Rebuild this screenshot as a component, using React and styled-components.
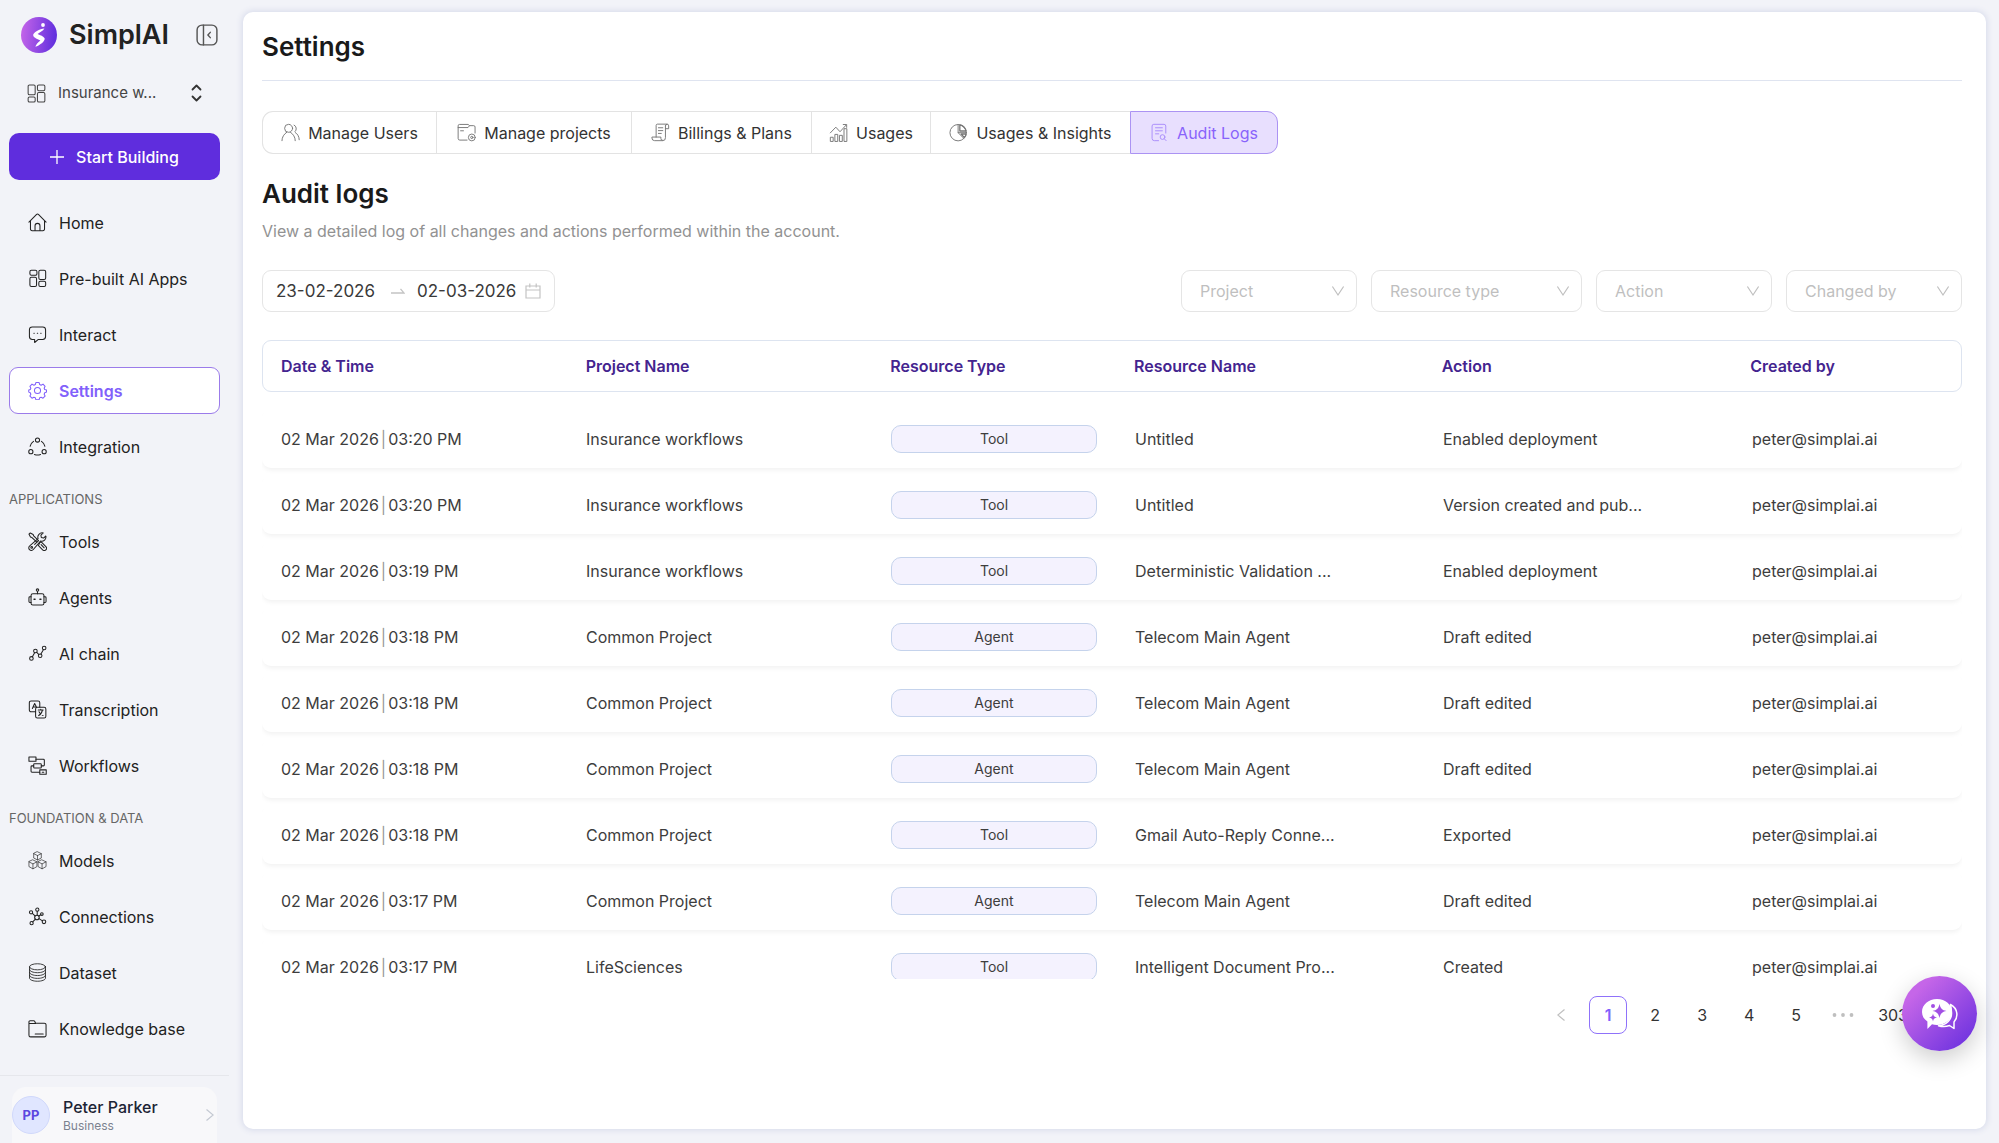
import React, { useState } from 'react';
import styled, { createGlobalStyle } from 'styled-components';

const GlobalStyle = createGlobalStyle`
    *, *::before, *::after {
        box-sizing: border-box;
    }

    body {
        margin: 0;
        background: #f2f3f8;
        color: #2b2b2b;
        font-family: Inter, sans-serif;
        font-size: 16px;
        line-height: 24px;
    }

    button, input, select {
        font: inherit;
        color: inherit;
    }

    h1, h2, p, ul {
        margin: 0;
        padding: 0;
    }
`;

/* ---------- Layout ---------- */

const Page = styled.div`
    display: grid;
    grid-template-columns: 229px 1fr;
    column-gap: 14px;
    height: 100vh;
    overflow: hidden;
`;

const Sidebar = styled.aside`
    display: flex;
    flex-direction: column;
    padding-top: 17px;
    min-height: 0;
`;

const Panel = styled.main`
    display: flex;
    flex-direction: column;
    min-width: 0;
    margin: 12px 13px 14px 0;
    padding: 16px 24px 19px 19px;
    background: #fff;
    border-radius: 10px;
    box-shadow: 0 0 6px 1px #d6daea;
`;

/* ---------- Sidebar ---------- */

const Brand = styled.div`
    display: flex;
    align-items: center;
    gap: 12px;
    height: 36px;
    padding: 0 11px 0 21px;
`;

const BrandName = styled.span`
    flex: 1;
    font-size: 27px;
    font-weight: 600;
    line-height: 36px;
    color: #222;
`;

const IconButton = styled.button`
    display: flex;
    padding: 0;
    border: 0;
    background: none;
    color: #555;
    cursor: pointer;
`;

const WorkspaceButton = styled.button`
    display: flex;
    align-items: center;
    gap: 12px;
    height: 48px;
    margin: 16px 9px 0;
    padding: 0 18px;
    border: 0;
    background: none;
    color: #444;
    font-size: 15px;
    text-align: left;
    cursor: pointer;

    span {
        flex: 1;
        white-space: nowrap;
    }
`;

const BuildButton = styled.button`
    display: flex;
    align-items: center;
    justify-content: center;
    gap: 12px;
    height: 47px;
    margin: 16px 9px 19px;
    border: 0;
    border-radius: 10px;
    background: #5f2ddd;
    color: #fff;
    font-weight: 500;
    cursor: pointer;
`;

const NavList = styled.ul`
    display: grid;
    gap: 9px;
    padding: 0 9px;
    list-style: none;
`;

const NavLink = styled.a`
    display: flex;
    align-items: center;
    gap: 12px;
    height: 47px;
    padding: 0 18px;
    border: 1px solid ${({ $active }) => ($active ? '#9b7bea' : 'transparent')};
    border-radius: 9px;
    background: ${({ $active }) => ($active ? '#fff' : 'transparent')};
    color: ${({ $active }) => ($active ? '#8160fb' : '#222')};
    font-weight: ${({ $active }) => ($active ? 600 : 400)};
    text-decoration: none;
    white-space: nowrap;
`;

const NavHeading = styled.h2`
    height: 48px;
    padding: 19px 9px 0;
    font-size: 13px;
    font-weight: 400;
    line-height: 20px;
    color: #666;
`;

const Profile = styled.div`
    margin-top: auto;
    padding: 11px 12px 0;
    border-top: 1px solid #e6e7ec;
`;

const ProfileButton = styled.button`
    display: flex;
    align-items: center;
    width: 100%;
    height: 56px;
    padding: 0 3px 0 0;
    border: 0;
    border-radius: 14px 14px 0 0;
    background: #f8f8fa;
    color: #c3c8d2;
    text-align: left;
    cursor: pointer;
`;

const Avatar = styled.span`
    width: 38px;
    height: 38px;
    border: 1px solid #d0d8fb;
    border-radius: 50%;
    background: #e0e6ff;
    color: #5b47e0;
    font-size: 13px;
    font-weight: 700;
    line-height: 36px;
    text-align: center;
`;

const ProfileText = styled.span`
    display: grid;
    flex: 1;
    margin-left: 13px;
    color: #1c2434;
    font-weight: 500;
    line-height: 20px;

    small {
        color: #7b828f;
        font-size: 12px;
        font-weight: 400;
        line-height: 17px;
    }
`;

/* ---------- Content ---------- */

const Title = styled.h1`
    font-size: 26px;
    font-weight: 600;
    line-height: 38px;
    color: #1a1a1a;
`;

const Header = styled.header`
    padding-bottom: 14px;
    border-bottom: 1px solid #dfe4f0;
`;

const Tabs = styled.nav`
    display: grid;
    grid-template-columns: 174px 195px 180px 119px 200px 148px;
    margin: 30px 0 21px;
`;

const Tab = styled.button`
    display: flex;
    align-items: center;
    justify-content: center;
    gap: 8px;
    height: 43px;
    padding: 0;
    border: 1px solid #e3e3e3;
    border-right-width: 0;
    background: #fff;
    color: #333;
    white-space: nowrap;
    cursor: pointer;

    svg {
        color: #777;
    }

    &:first-child {
        border-radius: 11px 0 0 11px;
    }

    &:last-child {
        border-right-width: 1px;
        border-radius: 0 11px 11px 0;
    }

    ${({ $active }) => $active && `
        border-color: #ab93f3;
        background: #e8dffe;
        color: #8863fb;

        svg {
            color: #a98cfb;
        }
    `}
`;

const Subtitle = styled.p`
    margin-top: 6px;
    color: #929292;
`;

const FilterBar = styled.div`
    display: flex;
    justify-content: space-between;
    margin: 27px 0 28px;
`;

const DateRange = styled.div`
    display: flex;
    align-items: center;
    width: 293px;
    height: 42px;
    padding: 0 12px 0 13px;
    border: 1px solid #e5e5e5;
    border-radius: 9px;
    color: #c4c4c4;
`;

const DateInput = styled.input`
    width: 108px;
    padding: 0;
    border: 0;
    outline: 0;
    background: none;
    color: #3a3a3a;
    font-size: 17px;
`;

const DateSeparator = styled.span`
    display: flex;
    width: 33px;
    padding-left: 7px;
`;

const Filters = styled.div`
    display: flex;
    gap: 14px;
`;

const SelectBox = styled.div`
    position: relative;
    width: ${({ $wide }) => ($wide ? '211px' : '176px')};
    color: #bfbfbf;

    select {
        width: 100%;
        height: 42px;
        padding: 0 36px 0 18px;
        border: 1px solid #e5e5e5;
        border-radius: 9px;
        outline: 0;
        background: #fff;
        appearance: none;
    }

    svg {
        position: absolute;
        top: 14px;
        right: 12px;
        pointer-events: none;
    }
`;

const LogTable = styled.table`
    display: block;
    width: 100%;

    thead {
        display: block;
    }

    tbody {
        display: block;
        max-height: calc(100vh - 556px);
        padding-top: 18px;
        overflow: hidden;
    }

    tr {
        display: grid;
        grid-template-columns: 305fr 305fr 244fr 308fr 309fr 229fr;
        align-items: center;
    }
`;

const HeadRow = styled.tr`
    height: 52px;
    border: 1px solid #dde4f0;
    border-radius: 9px;

    th {
        padding: 0 18px;
        color: #44248f;
        font-weight: 600;
        text-align: left;
    }
`;

const LogRow = styled.tr`
    height: 58px;
    margin-bottom: 8px;
    border-radius: 9px;
    box-shadow: 0 3px 5px -1px rgba(0, 0, 0, 0.06);

    td {
        min-width: 0;
        padding: 0 19px;
        color: #3d3d3d;
        white-space: nowrap;
    }
`;

const Divider = styled.span`
    margin: 0 2px;
    color: #999;
`;

const TypeTag = styled.span`
    display: block;
    height: 28px;
    border: 1px solid #c5d3ec;
    border-radius: 10px;
    background: #f4f2fe;
    font-size: 14px;
    line-height: 26px;
    text-align: center;
`;

const Pagination = styled.nav`
    display: flex;
    justify-content: flex-end;
    gap: 9px;
    margin-top: 17px;
`;

const PageButton = styled.button`
    display: flex;
    align-items: center;
    justify-content: center;
    min-width: 38px;
    height: 38px;
    padding: 0 6px;
    border: 1px solid ${({ $active }) => ($active ? '#8f72fa' : 'transparent')};
    border-radius: 8px;
    background: none;
    color: ${({ $active, $muted }) => ($active ? '#8160fb' : $muted ? '#bfbfbf' : '#333')};
    font-weight: ${({ $active }) => ($active ? 600 : 400)};
    cursor: pointer;
`;

const ChatButton = styled.button`
    position: fixed;
    right: 22px;
    bottom: 92px;
    display: flex;
    align-items: center;
    justify-content: center;
    width: 75px;
    height: 75px;
    padding: 0;
    border: 0;
    border-radius: 50%;
    background: linear-gradient(135deg, #c566e8 20%, #6f33df 90%);
    box-shadow: 0 8px 24px rgba(0, 0, 0, 0.2);
    color: #fff;
    cursor: pointer;
`;

/* ---------- Icons ---------- */

const Icon = ({ size = 19, children, width = 1.1 }) => (
    <svg width={size} height={size} viewBox="0 0 20 20" fill="none" stroke="currentColor"
        strokeWidth={width} strokeLinecap="round" strokeLinejoin="round" aria-hidden="true">
        {children}
    </svg>
);

const icons = {
    workspace: (
        <>
            <rect x="1.2" y="1" width="7.4" height="10.4" rx="1.4" />
            <rect x="11" y="1" width="7.8" height="6" rx="1.4" />
            <rect x="1.2" y="13.6" width="7.4" height="5.4" rx="1.4" />
            <rect x="11" y="9" width="7.8" height="10" rx="1.4" />
        </>
    ),
    home: (
        <>
            <path d="M1 9.6 8.8 1.6a1.7 1.7 0 0 1 2.4 0L19 9.6" />
            <path d="M2.6 8.6v8.2a1.8 1.8 0 0 0 1.8 1.9h11.2a1.8 1.8 0 0 0 1.8-1.9V8.6" />
            <path d="M7.4 18.5v-5a2.6 2.6 0 0 1 5.2 0v5" />
        </>
    ),
    apps: (
        <>
            <rect x="2" y="1.4" width="7.4" height="5.2" rx="1.6" />
            <rect x="11.4" y="1.4" width="7.2" height="9.6" rx="1.6" />
            <rect x="2" y="8.6" width="7" height="9.8" rx="1.6" />
            <rect x="11.4" y="13" width="7.2" height="5.4" rx="1.6" />
        </>
    ),
    interact: (
        <>
            <path d="M4.5 2h11a3 3 0 0 1 3 3v7.2a3 3 0 0 1-3 3h-4.6L7 18.4v-3.2H4.5a3 3 0 0 1-3-3V5a3 3 0 0 1 3-3z" />
            <path d="M6.2 8.6h.4M9.8 8.6h.4M13.4 8.6h.4" />
        </>
    ),
    settings: (
        <>
            <circle cx="10" cy="10" r="3.2" />
            <path d="m8.3 1.6 3.4 0 .6 2.1 1.5.7 2-1.1 2.2 2.3-1 2 .6 1.4 1.9.5v2.200l-1.900.7-.6 1.500 1 2-2.200 2.200-2-1-1.500.6-.6 2H8.300l-.6-2-1.500-.6-2 1-2.200-2.200 1-2-.6-1.500-1.600-.7V9.500L2.400 9l.6-1.400-1-2 2.200-2.300 2 1.100 1.500-.7z" />
        </>
    ),
    integration: (
        <>
            <circle cx="10" cy="3.2" r="2.2" />
            <circle cx="3" cy="15.4" r="2.2" />
            <circle cx="17" cy="15.4" r="2.2" />
            <path d="M5.8 4.6A8 8 0 0 0 2.2 9.8M14.2 4.6a8 8 0 0 1 3.6 5.2M6.8 18.4a9 9 0 0 0 6.4 0" />
        </>
    ),
    tools: (
        <>
            <path d="m1 2.2 1.4-1.2 3 1.6.6 1.6 5 5M9.3 10.7 4.2 5.8l-1.6-.6L1 2.2" />
            <path d="m11.6 12.8 1-2 1.6-.2 4.6 4.8a2.4 2.4 0 0 1-3.4 3.4l-4.6-4.6z" />
            <path d="M18.8 4.2 16.4 6.4l-2.4-.6-.4-2.4L16 1a4.6 4.6 0 0 0-5.4 6L1.8 14.6a2.7 2.7 0 1 0 3.8 3.8L13.2 9.600a4.6 4.6 0 0 0 5.600-5.400z" />
            <circle cx="3.9" cy="16.2" r=".9" />
            <path d="m13.8 13.2 3.2 3.4M7 13l4-4" />
        </>
    ),
    agents: (
        <>
            <rect x="3.2" y="6" width="13.6" height="12" rx="2" />
            <path d="M3.2 9.2H2A1 1 0 0 0 1 10.2v4a1 1 0 0 0 1 1h1.200M16.800 9.200H18a1 1 0 0 1 1 1v4a1 1 0 0 1-1 1h-1.200M10 6V3.600" />
            <circle cx="10" cy="2.2" r="1.3" />
            <path d="M6.4 11.8h1M12.6 11.8h1" strokeWidth="1.6" />
        </>
    ),
    chain: (
        <>
            <circle cx="3.6" cy="15.2" r="1.9" />
            <circle cx="7.8" cy="7.4" r="1.9" />
            <circle cx="12.8" cy="12.4" r="1.9" />
            <circle cx="17" cy="4.2" r="1.9" />
            <path d="m4.6 13.4 2.4-4.2M9.2 8.8l2.3 2.3M13.6 10.6l2.600-4.600" />
        </>
    ),
    transcription: (
        <>
            <path d="M8 12.4H3.200a1.800 1.800 0 0 1-1.800-1.800V2.800A1.800 1.800 0 0 1 3.200 1h7.400a1.800 1.800 0 0 1 1.800 1.800v4.800" />
            <rect x="8" y="7.6" width="10.8" height="11.4" rx="1.8" />
            <path d="M4.6 9 7 3.600l2 4M5.400 7.400h3M10.800 10.600h5.200M13.400 9.800v.8M11.200 16.400c2-1 3.400-3 4-5.800M11.600 12.400c.8 2 2.400 3.200 4.200 4" />
        </>
    ),
    workflows: (
        <>
            <rect x="1" y="1" width="7.4" height="4.6" />
            <rect x="6" y="8.2" width="8" height="4.4" rx=".8" />
            <rect x="12.4" y="14.6" width="6.8" height="4.6" />
            <path d="M8.4 3.400h7.800a1 1 0 0 1 1 1v5a1 1 0 0 1-1 1H14M6 10.400H4.200a1 1 0 0 0-1 1V16a1 1 0 0 0 1 1h8.200M15 17h1.600" />
        </>
    ),
    models: (
        <g strokeWidth=".7">
            <path d="m10 .8 4 2v4.600l-4 2-4-2V2.800zM6 2.800l4 2 4-2M10 4.800v4.600" />
            <path d="m5.200 9.400 4.200 2v5l-4.200 2.400-4.200-2.400v-5zM1 11.400l4.200 2.200 4.200-2.200M5.200 13.600v5" />
            <path d="m14.800 9.400 4.200 2v5l-4.200 2.400-4.200-2.400v-5zM10.600 11.400l4.200 2.200 4.200-2.200M14.800 13.600v5" />
        </g>
    ),
    connections: (
        <>
            <circle cx="9.8" cy="2.8" r="1.7" />
            <circle cx="3.2" cy="5.6" r="1.7" />
            <circle cx="14.6" cy="7.4" r="1.4" />
            <circle cx="9.4" cy="11" r="2.4" />
            <circle cx="3.8" cy="17" r="1.7" />
            <circle cx="16.8" cy="15.6" r="1.9" />
            <path d="M9.700 4.500v4M4.600 6.600l2.800 2.800M13.400 8.200l-2 1.200M7.800 12.800l-2.800 2.900M11.600 12.200l3.600 2.400" />
        </>
    ),
    dataset: (
        <g strokeWidth=".9">
            <ellipse cx="10" cy="4" rx="8.4" ry="3.2" />
            <path d="M1.600 4v12c0 1.700 3.800 3.200 8.400 3.200s8.400-1.500 8.400-3.200V4M1.600 7c0 1.700 3.800 3.200 8.400 3.200s8.400-1.500 8.400-3.200M1.600 10c0 1.700 3.800 3.200 8.400 3.200s8.400-1.500 8.400-3.200M1.600 13c0 1.700 3.800 3.200 8.400 3.200s8.400-1.500 8.400-3.200" />
        </g>
    ),
    knowledge: (
        <>
            <path d="M1 4.800v12.200a1.800 1.800 0 0 0 1.800 1.800h14.400a1.800 1.800 0 0 0 1.800-1.800V6.200a1.800 1.800 0 0 0-1.800-1.800H8L7 2.400A1.200 1.200 0 0 0 6 1.800H2.200A1.200 1.200 0 0 0 1 3v1.800h7" />
            <path d="M7.600 15.800h8.400" />
        </>
    ),
    users: (
        <>
            <circle cx="8" cy="5.6" r="4.2" />
            <path d="M1 18.600c0-3.800 2.200-7 5-8.800M15 18.600c0-3.800-2.200-7-5-8.800M13.800 2.200a4 4 0 0 1 1 6.800M15 10c2.400 1.400 4 4 4.200 7.600" />
        </>
    ),
    projects: (
        <>
            <path d="M10.600 18H3a1.800 1.800 0 0 1-1.800-1.800V3A1.500 1.500 0 0 1 2.700 1.500h9l1.500 1.300h4.400A1.400 1.400 0 0 1 19 4.200v6.400M1.200 4.800h10.400l1.600-2M3.800 8.200h3" />
            <circle cx="15.6" cy="15.2" r="3.6" />
            <circle cx="15.6" cy="15.2" r="1.2" />
        </>
    ),
    billing: (
        <>
            <path d="M5.400 14.800V2.600A1.400 1.400 0 0 1 6.800 1.200h10a1.800 1.800 0 0 1 1.800 1.800v3h-3.400M15.200 3v12.400a3 3 0 0 1-3 3.200H3.800A2.800 2.800 0 0 1 1 15.800v-1h9.400v1.400a2 2 0 0 0 2 2.200M16.800 1.200a1.700 1.700 0 0 0-1.600 1.800" />
            <path d="M7.800 5h4.600M7.800 8h4.600M7.800 11h3" />
        </>
    ),
    usages: (
        <>
            <path d="M1.400 19v-4h3v4zM6.200 19v-7h3v7zM11 19v-6h3v6zM15.800 19V6h3v13z" />
            <path d="m1.400 10.400 5.800-6 4.400 4.800L18 2.200M15 1.600h3.600v3" />
        </>
    ),
    insights: (
        <>
            <circle cx="9.6" cy="10.2" r="8.6" />
            <path d="M9.600 1.600v8.600l6 6M9.600 10.200h8.600" />
            <path d="M11.400 1.900v6.500h6.600a8.600 8.600 0 0 0-6.600-6.500zM12.800 11.600h5.200a9 9 0 0 1-1.800 3.800z" strokeWidth="1.400" />
        </>
    ),
    audit: (
        <>
            <path d="M9 18.600H4.600a2.400 2.400 0 0 1-2.400-2.400V3.200a1.800 1.800 0 0 1 1.800-1.800h10.800a1.800 1.800 0 0 1 1.800 1.800v7.400M5.800 5h7.200M5.800 8.200h7.200M5.800 11.400h3.400" />
            <circle cx="13.2" cy="14.8" r="2.5" />
            <path d="m15 16.600 2 2" />
        </>
    ),
};

const Logo = () => (
    <svg width="36" height="36" viewBox="0 0 36 36" aria-hidden="true">
        <defs>
            <linearGradient id="logoFill" x1="0" y1="0" x2="1" y2="0.1">
                <stop offset="0" stopColor="#c766e9" />
                <stop offset="1" stopColor="#6330de" />
            </linearGradient>
        </defs>
        <circle cx="18" cy="18" r="18" fill="url(#logoFill)" />
        <circle cx="22" cy="8" r="1.9" fill="#fff" />
        <path d="M23.400 11.400c-1.400 2.800-4.800 3.600-6.800 5.600 2.600 1.400 6 2.200 7 4.200 1 2.800-5.400 7.400-9.200 8.600.4-2.400 2.600-4.200 5-6.400-2.600-1.600-6.400-2.400-7.200-5-.6-3 6.800-6.600 11.200-7z" fill="#fff" />
    </svg>
);

const CollapseIcon = () => (
    <Icon size={22} width={1.3}>
        <rect x="1" y="1" width="18" height="18" rx="4.5" />
        <path d="M6.8 1v18M13 7.6 10.800 10l2.200 2.400" />
    </Icon>
);

const SortIcon = () => (
    <svg width="11" height="18" viewBox="0 0 11 18" fill="none" stroke="#333" strokeWidth="1.8" strokeLinecap="round" strokeLinejoin="round" aria-hidden="true">
        <path d="m1.500 5.500 4-4 4 4M1.500 12.500l4 4 4-4" />
    </svg>
);

const PlusIcon = () => (
    <svg width="14" height="14" viewBox="0 0 14 14" stroke="#fff" strokeWidth="1.3" aria-hidden="true">
        <path d="M7 0v14M0 7h14" />
    </svg>
);

const DownIcon = () => (
    <svg width="14" height="14" viewBox="0 0 14 14" fill="none" stroke="currentColor" strokeWidth="1.2" aria-hidden="true">
        <path d="m1.400 2.500 5.600 8.500 5.600-8.500" />
    </svg>
);

const ArrowIcon = () => (
    <svg width="14" height="8" viewBox="0 0 14 8" fill="none" stroke="currentColor" strokeWidth="1.3" aria-hidden="true">
        <path d="M0 6h13L9.500 1.800" />
    </svg>
);

const CalendarIcon = () => (
    <svg width="16" height="16" viewBox="0 0 16 16" fill="none" stroke="currentColor" strokeWidth="1.2" aria-hidden="true">
        <path d="M1 3h14v12H1zM1 7h14M4.800.5v4M11.200.5v4" />
    </svg>
);

const LeftIcon = () => (
    <svg width="8" height="12" viewBox="0 0 8 12" fill="none" stroke="currentColor" strokeWidth="1.2" aria-hidden="true">
        <path d="M7.500.5.8 6l6.700 5.500" />
    </svg>
);

const RightIcon = () => (
    <svg width="8" height="12" viewBox="0 0 8 12" fill="none" stroke="currentColor" strokeWidth="1.2" aria-hidden="true">
        <path d="M.5.5 7.200 6 .5 11.500" />
    </svg>
);

const DotsIcon = () => (
    <svg width="22" height="4" viewBox="0 0 22 4" fill="currentColor" aria-hidden="true">
        <circle cx="2.5" cy="2" r="1.9" />
        <circle cx="11" cy="2" r="1.9" />
        <circle cx="19.5" cy="2" r="1.9" />
    </svg>
);

const ChatIcon = () => (
    <svg width="36" height="32" viewBox="0 0 36 32" fill="none" aria-hidden="true">
        <path d="M28.500 6.500c7.500 4 8 12.500 3.500 17.500v6.500l-4.500-3a17 17 0 0 1-11 .2c8-1 13.500-6 13-13.200-.2-3-.5-5.500-1-8z" stroke="#fff" strokeWidth="1.5" strokeLinejoin="round" />
        <path d="M15 1C23.400 1 30 6.600 30 14s-6.600 13-15 13c-1.800 0-3.500-.3-5-.8L5.400 31v-7.500C2 21.200 0 18 0 14 0 6.600 6.600 1 15 1z" fill="#fff" />
        <path d="M17.500 5.500c.9 5 2.500 6.600 7 7.500-4.500.9-6.100 2.500-7 7-.9-4.500-2.500-6.100-7-7 4.500-.9 6.100-2.500 7-7zM11 15.500c.5 2.700 1.300 3.500 4 4-2.700.5-3.500 1.300-4 4-.5-2.700-1.300-3.500-4-4 2.700-.5 3.500-1.300 4-4z" fill="#a250e4" />
        <circle cx="11" cy="8" r="2" fill="#a250e4" />
    </svg>
);

/* ---------- Data ---------- */

const mainNav = [
    ['home', 'Home'],
    ['apps', 'Pre-built AI Apps'],
    ['interact', 'Interact'],
    ['settings', 'Settings'],
    ['integration', 'Integration'],
];

const applicationNav = [
    ['tools', 'Tools'],
    ['agents', 'Agents'],
    ['chain', 'AI chain'],
    ['transcription', 'Transcription'],
    ['workflows', 'Workflows'],
];

const dataNav = [
    ['models', 'Models'],
    ['connections', 'Connections'],
    ['dataset', 'Dataset'],
    ['knowledge', 'Knowledge base'],
];

const tabs = [
    ['users', 'Manage Users'],
    ['projects', 'Manage projects'],
    ['billing', 'Billings & Plans'],
    ['usages', 'Usages'],
    ['insights', 'Usages & Insights'],
    ['audit', 'Audit Logs'],
];

const columns = ['Date & Time', 'Project Name', 'Resource Type', 'Resource Name', 'Action', 'Created by'];

const logs = [
    { time: '03:20 PM', project: 'Insurance workflows', type: 'Tool', name: 'Untitled', action: 'Enabled deployment' },
    { time: '03:20 PM', project: 'Insurance workflows', type: 'Tool', name: 'Untitled', action: 'Version created and pub...' },
    { time: '03:19 PM', project: 'Insurance workflows', type: 'Tool', name: 'Deterministic Validation ...', action: 'Enabled deployment' },
    { time: '03:18 PM', project: 'Common Project', type: 'Agent', name: 'Telecom Main Agent', action: 'Draft edited' },
    { time: '03:18 PM', project: 'Common Project', type: 'Agent', name: 'Telecom Main Agent', action: 'Draft edited' },
    { time: '03:18 PM', project: 'Common Project', type: 'Agent', name: 'Telecom Main Agent', action: 'Draft edited' },
    { time: '03:18 PM', project: 'Common Project', type: 'Tool', name: 'Gmail Auto-Reply Conne...', action: 'Exported' },
    { time: '03:17 PM', project: 'Common Project', type: 'Agent', name: 'Telecom Main Agent', action: 'Draft edited' },
    { time: '03:17 PM', project: 'LifeSciences', type: 'Tool', name: 'Intelligent Document Pro...', action: 'Created' },
];

/* ---------- Components ---------- */

const NavGroup = ({ items, active }) => (
    <NavList>
        {items.map(([id, label]) => (
            <li key={id}>
                <NavLink href={`#${id}`} $active={id === active}>
                    <Icon>{icons[id]}</Icon>
                    {label}
                </NavLink>
            </li>
        ))}
    </NavList>
);

const FilterSelect = ({ label, wide }) => (
    <SelectBox $wide={wide}>
        <select aria-label={label} defaultValue="">
            <option value="">{label}</option>
        </select>
        <DownIcon />
    </SelectBox>
);

const App = () => {
    const [tab, setTab] = useState('audit');
    const [page, setPage] = useState(1);
    const [from, setFrom] = useState('23-02-2026');
    const [to, setTo] = useState('02-03-2026');

    return (
        <>
            <GlobalStyle />
            <Page>
                <Sidebar>
                    <Brand>
                        <Logo />
                        <BrandName>SimplAI</BrandName>
                        <IconButton aria-label="Collapse sidebar"><CollapseIcon /></IconButton>
                    </Brand>

                    <WorkspaceButton>
                        <Icon>{icons.workspace}</Icon>
                        <span>Insurance w...</span>
                        <SortIcon />
                    </WorkspaceButton>

                    <BuildButton>
                        <PlusIcon />
                        Start Building
                    </BuildButton>

                    <nav>
                        <NavGroup items={mainNav} active="settings" />
                        <NavHeading>APPLICATIONS</NavHeading>
                        <NavGroup items={applicationNav} />
                        <NavHeading>FOUNDATION &amp; DATA</NavHeading>
                        <NavGroup items={dataNav} />
                    </nav>

                    <Profile>
                        <ProfileButton>
                            <Avatar>PP</Avatar>
                            <ProfileText>
                                Peter Parker
                                <small>Business</small>
                            </ProfileText>
                            <RightIcon />
                        </ProfileButton>
                    </Profile>
                </Sidebar>

                <Panel>
                    <Header>
                        <Title>Settings</Title>
                    </Header>

                    <Tabs>
                        {tabs.map(([id, label]) => (
                            <Tab key={id} $active={id === tab} onClick={() => setTab(id)}>
                                <Icon width={1}>{icons[id]}</Icon>
                                {label}
                            </Tab>
                        ))}
                    </Tabs>

                    <Title as="h2">Audit logs</Title>
                    <Subtitle>View a detailed log of all changes and actions performed within the account.</Subtitle>

                    <FilterBar>
                        <DateRange>
                            <DateInput aria-label="Start date" value={from} onChange={(e) => setFrom(e.target.value)} />
                            <DateSeparator><ArrowIcon /></DateSeparator>
                            <DateInput aria-label="End date" value={to} onChange={(e) => setTo(e.target.value)} />
                            <CalendarIcon />
                        </DateRange>
                        <Filters>
                            <FilterSelect label="Project" />
                            <FilterSelect label="Resource type" wide />
                            <FilterSelect label="Action" />
                            <FilterSelect label="Changed by" />
                        </Filters>
                    </FilterBar>

                    <LogTable>
                        <thead>
                            <HeadRow>
                                {columns.map((column) => <th key={column}>{column}</th>)}
                            </HeadRow>
                        </thead>
                        <tbody>
                            {logs.map((log, i) => (
                                <LogRow key={i}>
                                    <td>02 Mar 2026<Divider>|</Divider>{log.time}</td>
                                    <td>{log.project}</td>
                                    <td><TypeTag>{log.type}</TypeTag></td>
                                    <td>{log.name}</td>
                                    <td>{log.action}</td>
                                    <td>peter@simplai.ai</td>
                                </LogRow>
                            ))}
                        </tbody>
                    </LogTable>

                    <Pagination aria-label="Pagination">
                        <PageButton $muted aria-label="Previous page"><LeftIcon /></PageButton>
                        {[1, 2, 3, 4, 5].map((n) => (
                            <PageButton key={n} $active={n === page} onClick={() => setPage(n)}>{n}</PageButton>
                        ))}
                        <PageButton $muted aria-label="More pages"><DotsIcon /></PageButton>
                        <PageButton onClick={() => setPage(303)}>303</PageButton>
                        <PageButton aria-label="Next page"><RightIcon /></PageButton>
                    </Pagination>
                </Panel>
            </Page>

            <ChatButton aria-label="Open chat"><ChatIcon /></ChatButton>
        </>
    );
};

export default App;
